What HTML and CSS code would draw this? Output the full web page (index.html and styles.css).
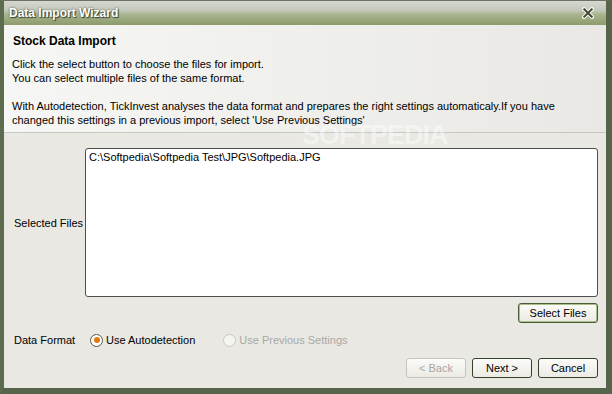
FILE: index.html
```html
<!DOCTYPE html>
<html lang="en">
<head>
    <meta charset="UTF-8">
    <title>Data Import Wizard</title>
    <link rel="stylesheet" href="styles.css">
</head>
<body>
    <div class="window">
        <div class="titlebar">
            <span class="title">Data Import Wizard</span>
            <svg class="close" width="12" height="12" viewBox="0 0 12 12">
                <path d="M2 2 L10 10 M10 2 L2 10" stroke="#f4f4ee" stroke-width="4" stroke-linecap="square"/>
                <path d="M2.3 2.3 L9.7 9.7 M9.7 2.3 L2.3 9.7" stroke="#3e4a32" stroke-width="2" stroke-linecap="square"/>
            </svg>
        </div>
        <div class="header">
            <h2>Stock Data Import</h2>
            <p>Click the select button to choose the files for import.<br>You can select multiple files of the same format.</p>
            <p>With Autodetection, TickInvest analyses the data format and prepares the right settings automaticaly.If you have changed this settings in a previous import, select 'Use Previous Settings'</p>
            <span class="watermark">SOFTPEDIA</span>
        </div>
        <div class="content">
            <div class="files-row">
                <span class="label">Selected Files</span>
                <div class="filebox">C:\Softpedia\Softpedia Test\JPG\Softpedia.JPG</div>
            </div>
            <div class="select-row">
                <button class="btn btn-default">Select Files</button>
            </div>
            <div class="format-row">
                <span class="label">Data Format</span>
                <span class="radio checked"></span><span class="opt">Use Autodetection</span>
                <span class="radio disabled"></span><span class="opt disabled-text">Use Previous Settings</span>
            </div>
            <div class="nav-row">
                <button class="btn" disabled>&lt; Back</button>
                <button class="btn">Next &gt;</button>
                <button class="btn cancel">Cancel</button>
            </div>
        </div>
    </div>
</body>
</html>
```
FILE: styles.css
```css
html, body {
    margin: 0;
    padding: 0;
}
body {
    font-family: "Liberation Sans", Arial, sans-serif;
    font-size: 11px;
    color: #000;
}
.window {
    width: 612px;
    height: 394px;
    box-sizing: border-box;
    border-left: 4px solid #5d6c4d;
    border-right: 6px solid #56654a;
    border-bottom: 6px solid #56654a;
    border-top: 1px solid #6b7360;
    display: flex;
    flex-direction: column;
    background: #e9e8e3;
}
.titlebar {
    height: 24px;
    background: linear-gradient(to bottom, #d6d8d0 0%, #c3c7bb 40%, #a9b58e 55%, #8c9b6c 100%);
    display: flex;
    align-items: center;
    justify-content: space-between;
    padding: 0 12px 0 5px;
}
.title {
    color: #fff;
    font-weight: bold;
    font-size: 12px;
    text-shadow: 1px 1px 1px #3c4530, 0 0 2px #3c4530;
}
.close {
    display: block;
}
.header {
    position: relative;
    background: linear-gradient(to right, #f6f6f4, #e9e8e4);
    padding: 8px 8px 5px 8px;
    border-bottom: 1px solid #c9c9c3;
    line-height: 14px;
}
.header h2 {
    font-size: 12px;
    font-weight: bold;
    margin: 0 0 8px 1px;
    line-height: 16px;
}
.header p {
    margin: 0 0 14px 0;
    font-size: 11px;
}
.header p:last-of-type {
    margin-bottom: 0;
}
.watermark {
    position: absolute;
    left: 298px;
    top: 97px;
    font-weight: bold;
    font-size: 27px;
    line-height: 27px;
    letter-spacing: -1px;
    color: rgba(255, 255, 255, 0.45);
    pointer-events: none;
}
.content {
    flex: 1;
    padding: 15px 8px 10px 10px;
    display: flex;
    flex-direction: column;
}
.files-row {
    display: flex;
    align-items: center;
}
.label {
    width: 71px;
    flex: none;
}
.filebox {
    flex: 1;
    height: 143px;
    background: #fff;
    border: 1px solid #4e4e4e;
    border-radius: 3px;
    padding: 2px 3px;
}
.select-row {
    display: flex;
    justify-content: flex-end;
    margin-top: 6px;
}
.btn {
    font-family: inherit;
    font-size: 11px;
    width: 60px;
    height: 20px;
    padding: 0;
    background: linear-gradient(to bottom, #fbfbf9, #eceae4);
    border: 1px solid #35402a;
    border-radius: 3px;
    color: #000;
}
.btn-default {
    width: 80px;
    border: 1px solid #4a5a3a;
    box-shadow: inset 0 0 0 1px #a8bf8a;
}
.btn:disabled {
    color: #a7a69f;
    border-color: #c6c5bd;
}
.format-row {
    display: flex;
    align-items: center;
    margin-top: 7px;
    height: 20px;
}
.format-row .label {
    width: 76px;
}
.radio {
    width: 11px;
    height: 11px;
    border: 1px solid #4f5a45;
    border-radius: 50%;
    background: #fff;
    box-sizing: content-box;
    margin-right: 3px;
    position: relative;
}
.radio.checked::after {
    content: "";
    position: absolute;
    left: 2.5px;
    top: 2.5px;
    width: 6px;
    height: 6px;
    border-radius: 50%;
    background: #e4780f;
}
.radio.disabled {
    border-color: #c9c8c0;
    background: #f4f4f0;
    margin-left: 28px;
}
.disabled-text {
    color: #aaa9a2;
}
.nav-row {
    margin-top: auto;
    display: flex;
    justify-content: flex-end;
    gap: 6px;
}
```
